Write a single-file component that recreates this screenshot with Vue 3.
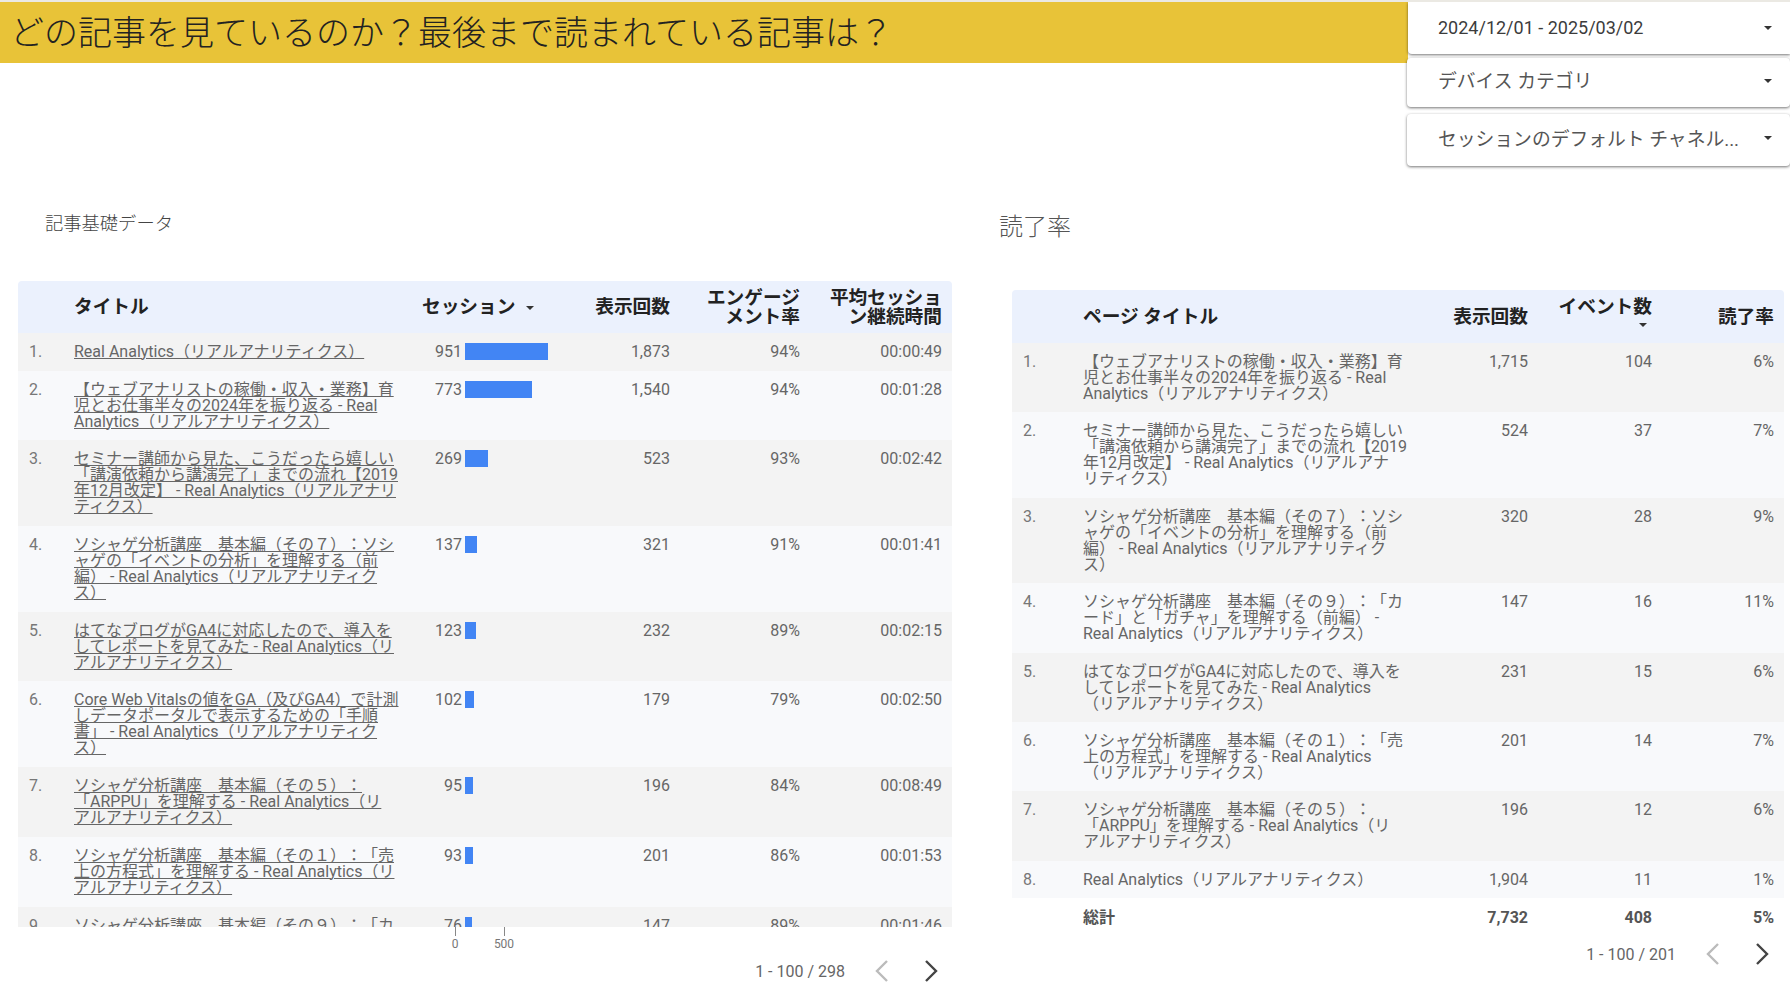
<template>
  <div class="page">
    <div class="top">
      <h1 class="page-title">{{ pageTitle }}</h1>
      <div class="filters">
        <div v-for="f in filters" :key="f.label" :class="['filter', f.cls]">
          <span>{{ f.label }}</span>
          <i class="caret"></i>
        </div>
      </div>
    </div>

    <div class="main">
      <section class="left">
        <h2 class="left-title">記事基礎データ</h2>
        <div class="table">
          <div class="row head">
            <div></div>
            <div class="title-cell">タイトル</div>
            <div class="session-head">セッション<i class="caret"></i></div>
            <div class="num">表示回数</div>
            <div class="num">エンゲージ<br />メント率</div>
            <div class="num">平均セッショ<br />ン継続時間</div>
          </div>
          <div class="body">
            <div v-for="(r, i) in articles" :key="i" class="row">
              <div class="rank">{{ i + 1 }}.</div>
              <div class="title-cell link">
                <span v-for="line in r.lines" :key="line" class="line">{{ line }}</span>
              </div>
              <div class="session">
                <span class="session-num">{{ r.sessions }}</span>
                <span class="bar" :style="{ width: r.sessions * 0.0873 + 'px' }"></span>
              </div>
              <div class="num">{{ r.views }}</div>
              <div class="num">{{ r.rate }}</div>
              <div class="num">{{ r.time }}</div>
            </div>
          </div>
        </div>
        <div class="axis">
          <div class="tick"><i></i>0</div>
          <div class="tick"><i></i>500</div>
        </div>
        <div class="pager pager-left">
          <span>1 - 100 / 298</span>
          <svg viewBox="0 0 24 24" class="off"><path d="M17 2 7 12l10 10" /></svg>
          <svg viewBox="0 0 24 24"><path d="M7 2l10 10L7 22" /></svg>
        </div>
      </section>

      <section class="right">
        <h2 class="right-title">読了率</h2>
        <div class="table">
          <div class="row head">
            <div></div>
            <div class="title-cell">ページ タイトル</div>
            <div class="num">表示回数</div>
            <div class="num event-head">イベント数<i class="caret"></i></div>
            <div class="num">読了率</div>
          </div>
          <div v-for="(r, i) in pages" :key="i" class="row">
            <div class="rank">{{ i + 1 }}.</div>
            <div class="title-cell">
              <span v-for="line in r.lines" :key="line" class="line">{{ line }}</span>
            </div>
            <div class="num">{{ r.views }}</div>
            <div class="num">{{ r.events }}</div>
            <div class="num">{{ r.rate }}</div>
          </div>
          <div class="row total">
            <div></div>
            <div class="title-cell">総計</div>
            <div class="num">7,732</div>
            <div class="num">408</div>
            <div class="num">5%</div>
          </div>
        </div>
        <div class="pager pager-right">
          <span>1 - 100 / 201</span>
          <svg viewBox="0 0 24 24" class="off"><path d="M17 2 7 12l10 10" /></svg>
          <svg viewBox="0 0 24 24"><path d="M7 2l10 10L7 22" /></svg>
        </div>
      </section>
    </div>
  </div>
</template>

<script setup>
// full-width punctuation, written as escapes so it stays full-width
const LP = '\uFF08'
const RP = '\uFF09'
const COLON = '\uFF1A'
const QM = '\uFF1F'
const SP = '\u3000'
const N1 = '\uFF11'
const N5 = '\uFF15'
const N7 = '\uFF17'
const N9 = '\uFF19'

const pageTitle = `どの記事を見ているのか${QM}最後まで読まれている記事は${QM}`

const filters = [
  { label: '2024/12/01 - 2025/03/02', cls: 'date' },
  { label: 'デバイス カテゴリ', cls: 'device' },
  { label: 'セッションのデフォルト チャネル...', cls: 'channel' },
]

const home = [`Real Analytics${LP}リアルアナリティクス${RP}`]
const analyst = [
  '【ウェブアナリストの稼働・収入・業務】育',
  '児とお仕事半々の2024年を振り返る - Real',
  `Analytics${LP}リアルアナリティクス${RP}`,
]
const game7 = [
  `ソシャゲ分析講座${SP}基本編${LP}その${N7}${RP}${COLON}ソシ`,
  `ャゲの「イベントの分析」を理解する${LP}前`,
  `編${RP} - Real Analytics${LP}リアルアナリティク`,
  `ス${RP}`,
]
const game5 = [
  `ソシャゲ分析講座${SP}基本編${LP}その${N5}${RP}${COLON}`,
  `「ARPPU」を理解する - Real Analytics${LP}リ`,
  `アルアナリティクス${RP}`,
]

const articles = [
  { lines: home, sessions: 951, views: '1,873', rate: '94%', time: '00:00:49' },
  { lines: analyst, sessions: 773, views: '1,540', rate: '94%', time: '00:01:28' },
  {
    lines: [
      'セミナー講師から見た、こうだったら嬉しい',
      '「講演依頼から講演完了」までの流れ【2019',
      `年12月改定】 - Real Analytics${LP}リアルアナリ`,
      `ティクス${RP}`,
    ],
    sessions: 269,
    views: '523',
    rate: '93%',
    time: '00:02:42',
  },
  { lines: game7, sessions: 137, views: '321', rate: '91%', time: '00:01:41' },
  {
    lines: [
      'はてなブログがGA4に対応したので、導入を',
      `してレポートを見てみた - Real Analytics${LP}リ`,
      `アルアナリティクス${RP}`,
    ],
    sessions: 123,
    views: '232',
    rate: '89%',
    time: '00:02:15',
  },
  {
    lines: [
      `Core Web Vitalsの値をGA${LP}及びGA4${RP}で計測`,
      'しデータポータルで表示するための「手順',
      `書」 - Real Analytics${LP}リアルアナリティク`,
      `ス${RP}`,
    ],
    sessions: 102,
    views: '179',
    rate: '79%',
    time: '00:02:50',
  },
  { lines: game5, sessions: 95, views: '196', rate: '84%', time: '00:08:49' },
  {
    lines: [
      `ソシャゲ分析講座${SP}基本編${LP}その${N1}${RP}${COLON}「売`,
      `上の方程式」を理解する - Real Analytics${LP}リ`,
      `アルアナリティクス${RP}`,
    ],
    sessions: 93,
    views: '201',
    rate: '86%',
    time: '00:01:53',
  },
  {
    lines: [`ソシャゲ分析講座${SP}基本編${LP}その${N9}${RP}${COLON}「カ`],
    sessions: 76,
    views: '147',
    rate: '89%',
    time: '00:01:46',
  },
]

const pages = [
  { lines: analyst, views: '1,715', events: 104, rate: '6%' },
  {
    lines: [
      'セミナー講師から見た、こうだったら嬉しい',
      '「講演依頼から講演完了」までの流れ【2019',
      `年12月改定】 - Real Analytics${LP}リアルアナ`,
      `リティクス${RP}`,
    ],
    views: '524',
    events: 37,
    rate: '7%',
  },
  { lines: game7, views: '320', events: 28, rate: '9%' },
  {
    lines: [
      `ソシャゲ分析講座${SP}基本編${LP}その${N9}${RP}${COLON}「カ`,
      `ード」と「ガチャ」を理解する${LP}前編${RP} -`,
      `Real Analytics${LP}リアルアナリティクス${RP}`,
    ],
    views: '147',
    events: 16,
    rate: '11%',
  },
  {
    lines: [
      'はてなブログがGA4に対応したので、導入を',
      'してレポートを見てみた - Real Analytics',
      `${LP}リアルアナリティクス${RP}`,
    ],
    views: '231',
    events: 15,
    rate: '6%',
  },
  {
    lines: [
      `ソシャゲ分析講座${SP}基本編${LP}その${N1}${RP}${COLON}「売`,
      '上の方程式」を理解する - Real Analytics',
      `${LP}リアルアナリティクス${RP}`,
    ],
    views: '201',
    events: 14,
    rate: '7%',
  },
  { lines: game5, views: '196', events: 12, rate: '6%' },
  { lines: home, views: '1,904', events: 11, rate: '1%' },
]
</script>

<style scoped>
.page {
  width: 1790px;
  height: 1006px;
  overflow: hidden;
  box-sizing: border-box;
  border-top: 2px solid #ebe9e3;
  font-family: Roboto, "Noto Sans CJK JP", sans-serif;
  font-size: 16px;
  color: #666;
  text-spacing-trim: space-all;
}

.top {
  display: flex;
  height: 164px;
}

.page-title {
  flex: 1;
  height: 61px;
  margin: 0;
  padding-left: 10px;
  background: #e8c338;
  color: #222;
  font-size: 34px;
  font-weight: 300;
  line-height: 62px;
  white-space: nowrap;
}

.filters {
  width: 382px;
  display: flex;
  flex-direction: column;
}

.filter {
  display: flex;
  align-items: center;
  justify-content: space-between;
  box-sizing: border-box;
  padding: 0 18px 4px 31px;
  background: #fff;
  border-radius: 4px;
  font-size: 18.8px;
  color: #555;
  box-shadow: 0 1px 3px rgba(0, 0, 0, 0.55);
}

.filter .caret {
  margin-top: 2px;
}

.filter.date {
  height: 52px;
  padding-left: 30px;
  padding-bottom: 2px;
  font-size: 18px;
  color: #3c3c3c;
  border-radius: 0 0 0 4px;
}

.filter.device {
  height: 49px;
  margin: 4px 0 0 -1px;
  padding-bottom: 6px;
}

.filter.channel {
  height: 52px;
  margin: 7px 0 0 -1px;
  padding-bottom: 6px;
}

.caret {
  display: inline-block;
  width: 0;
  height: 0;
  border-left: 4px solid transparent;
  border-right: 4px solid transparent;
  border-top: 4px solid #333;
}

.main {
  display: flex;
}

.left {
  width: 934px;
  margin-left: 18px;
  padding-top: 45px;
}

.right {
  width: 785px;
  margin-left: 47px;
  padding-top: 45px;
}

.left-title {
  margin: 0 0 45px 27px;
  font-size: 18.3px;
  font-weight: 300;
  line-height: 25px;
  color: #444;
}

.right-title {
  margin: 0 0 47px;
  font-size: 24px;
  font-weight: 300;
  line-height: 32px;
  color: #555;
}

.right .table {
  margin-left: 13px;
}

.row {
  display: grid;
  line-height: 16px;
  background: #f8f9fb;
}

.left .row {
  grid-template-columns: 44px 350px 148px 120px 130px 142px;
}

.right .row {
  grid-template-columns: 59px 347px 120px 124px 122px;
}

.row:not(.head):not(.total) > div {
  padding-top: 11px;
  padding-bottom: 10.7px;
}

.right .row:not(.head):not(.total) > div {
  padding-bottom: 10.4px;
}

.body .row:nth-child(odd),
.right .table .row:nth-child(even) {
  background: #f3f3f3;
}

.head {
  align-items: center;
  box-sizing: border-box;
  height: 52px;
  padding-top: 2px;
  background: #ebf1fd !important;
  border-radius: 4px 4px 0 0;
  color: #222;
  font-size: 18.7px;
  font-weight: 700;
  line-height: 19.5px;
}

.right .head {
  height: 53px;
}

.body {
  height: 594px;
  overflow: hidden;
}

.rank {
  padding-left: 11px;
  color: #777;
}

.title-cell {
  padding-left: 12px;
}

.line {
  display: block;
  white-space: nowrap;
}

.link .line {
  text-decoration: underline;
  text-decoration-thickness: 1px;
}

.num {
  padding-right: 10px;
  text-align: right;
}

.session {
  display: flex;
  align-items: flex-start;
}

.session-num {
  width: 50px;
  text-align: right;
}

.bar {
  height: 17px;
  margin: -1px 0 0 3px;
  background: #4285f4;
}

.session-head {
  display: flex;
  align-items: center;
  padding-left: 10px;
}

.session-head .caret {
  margin-left: 11px;
}

.event-head {
  display: flex;
  flex-direction: column;
  align-items: flex-end;
  padding-bottom: 10px;
}

.event-head .caret {
  margin: 6px 5px 0 0;
}

.total {
  align-items: center;
  height: 39px;
  background: #fff !important;
  font-weight: 700;
  color: #555;
}

.axis {
  display: flex;
  gap: 9px;
  margin-left: 417px;
  font-size: 12px;
  color: #777;
}

.tick {
  width: 40px;
  display: flex;
  flex-direction: column;
  align-items: center;
  line-height: 16px;
}

.tick i {
  width: 1px;
  height: 9px;
  background: #888;
}

.pager {
  display: flex;
  align-items: center;
  justify-content: flex-end;
  gap: 25px;
  font-size: 16px;
}

.pager-left {
  margin-top: 7px;
  padding-right: 9px;
}

.pager-right {
  margin-top: 5px;
  padding-right: 10px;
}

.pager svg {
  width: 24px;
  height: 24px;
}

.pager path {
  fill: none;
  stroke: #444;
  stroke-width: 2.4;
}

.pager .off path {
  stroke: #bbb;
}
</style>

<style>
body {
  background: #fff;
}
</style>
